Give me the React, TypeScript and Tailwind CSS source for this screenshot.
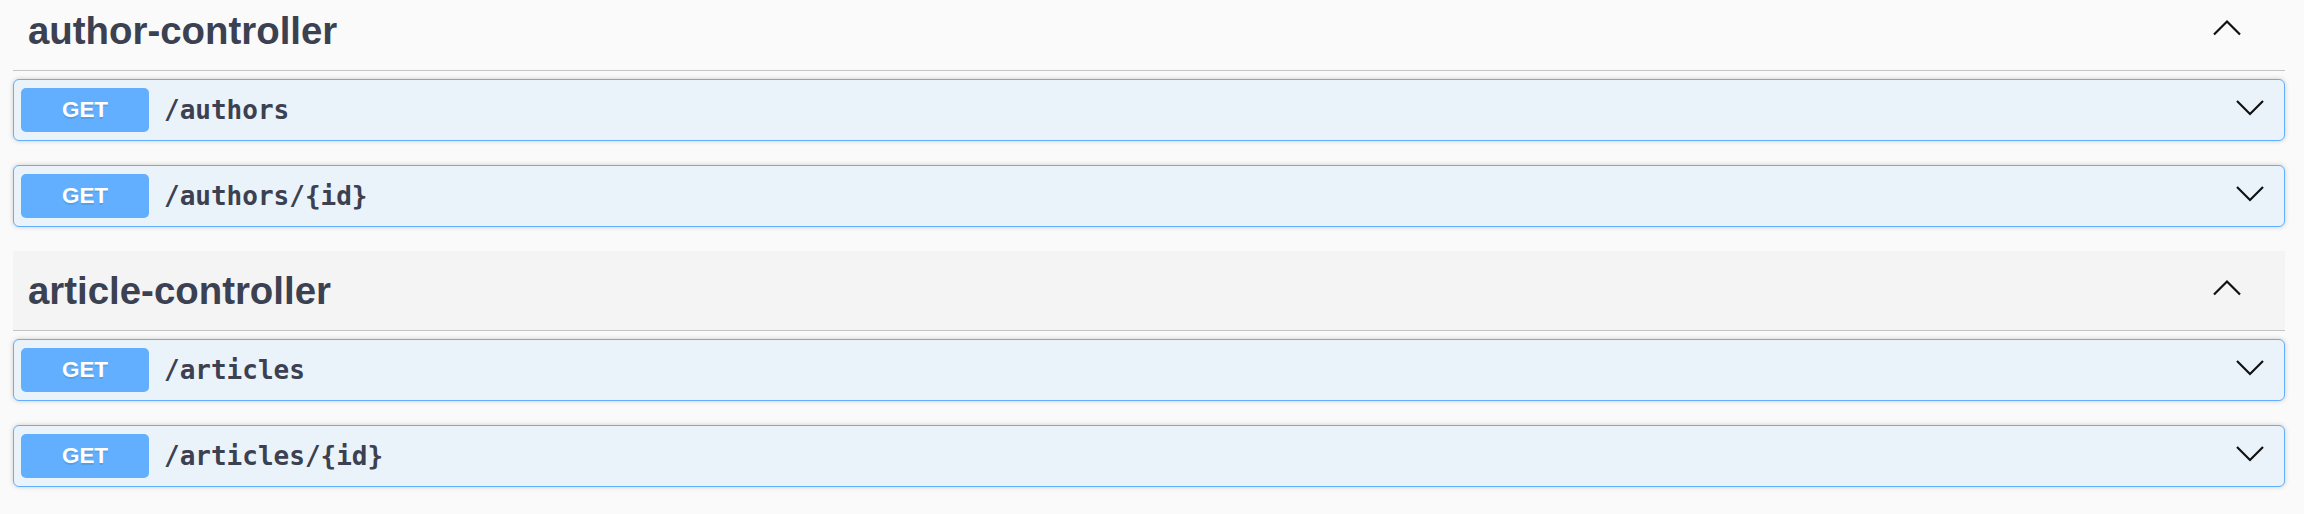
const sections = [
  {
    name: "author-controller",
    hovered: false,
    ops: ["/authors", "/authors/{id}"],
  },
  {
    name: "article-controller",
    hovered: true,
    ops: ["/articles", "/articles/{id}"],
  },
];

function ChevronUp() {
  return (
    <svg width="32" height="32" viewBox="0 0 32 32" fill="none" className="shrink-0">
      <polyline points="3,19.5 16,6.5 29,19.5" stroke="#111" strokeWidth="2.2" />
    </svg>
  );
}

function ChevronDown() {
  return (
    <svg width="32" height="32" viewBox="0 0 32 32" fill="none" className="shrink-0">
      <polyline points="3,7 16,20 29,7" stroke="#111" strokeWidth="2.2" />
    </svg>
  );
}

function Operation({ path }: { path: string }) {
  return (
    <div className="mb-[24px] flex h-[62px] items-center rounded-[6px] border-[1.6px] border-[#61affe] bg-[#ebf3fa] pl-[7px] pr-[18px] shadow-[0_0_5px_rgba(0,0,0,0.19)]">
      <span className="flex h-[44px] w-[128px] shrink-0 items-center justify-center rounded-[5px] bg-[#61affe] font-['Liberation_Sans',Arial,sans-serif] text-[22.4px] font-bold text-white [text-shadow:0_1.6px_0_rgba(0,0,0,0.1)]">
        GET
      </span>
      <span className="ml-[15px] flex-1 font-['DejaVu_Sans_Mono',Menlo,monospace] text-[26px] font-bold text-[#3b4151]">
        {path}
      </span>
      <ChevronDown />
    </div>
  );
}

export default function App() {
  return (
    <div className="h-[514px] overflow-hidden bg-[#fafafa]">
      <div className="-mt-[9px] pl-[13px] pr-[19px]">
        {sections.map((s) => (
          <section key={s.name}>
            <div
              className={`mb-[8px] flex h-[80px] items-center border-b-[1.6px] border-[#c4c5c9] pl-[15px] pr-[42px] ${
                s.hovered ? "bg-[#f4f4f4]" : ""
              }`}
            >
              <h3 className="flex-1 font-['Liberation_Sans',Arial,sans-serif] text-[38.4px] font-bold text-[#3b4151]">
                {s.name}
              </h3>
              <ChevronUp />
            </div>
            {s.ops.map((p) => (
              <Operation key={p} path={p} />
            ))}
          </section>
        ))}
      </div>
    </div>
  );
}
